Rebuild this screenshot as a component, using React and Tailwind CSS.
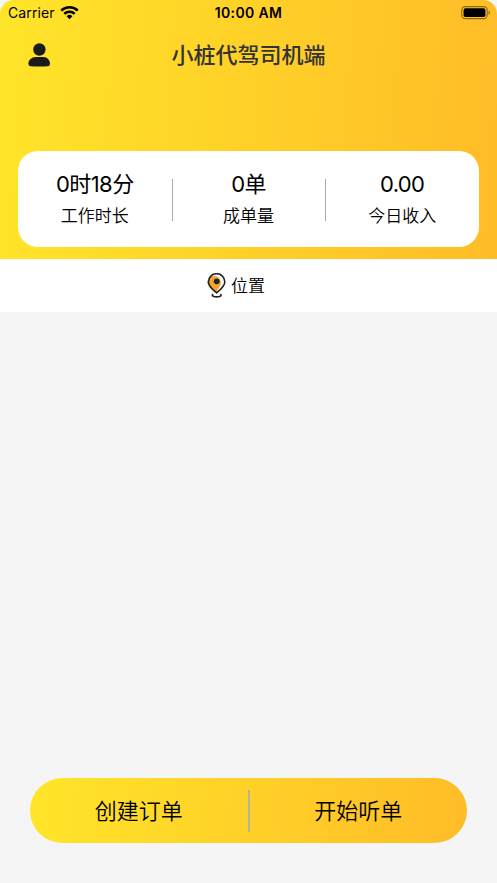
const stats = [
  { value: '0时18分', label: '工作时长' },
  { value: '0单', label: '成单量' },
  { value: '0.00', label: '今日收入' },
];

function WifiIcon() {
  return (
    <svg className="ml-[5px] h-[14px] w-[19px]" viewBox="0 0 19 14" fill="none" stroke="#000" strokeWidth="2.5">
      <path d="M1.2 4.7a11.8 11.8 0 0 1 16.6 0" />
      <path d="M4.3 7.9a7.4 7.4 0 0 1 10.4 0" />
      <path d="M9.5 13.2 6.6 10.3a4.1 4.1 0 0 1 5.8 0Z" fill="#000" stroke="none" />
    </svg>
  );
}

function BatteryIcon() {
  return (
    <svg className="h-[14px] w-[30px]" viewBox="0 0 30 14">
      <rect x="0.8" y="0.6" width="25.4" height="12" rx="3.6" fill="none" stroke="#000" strokeOpacity=".45" strokeWidth="1.1" />
      <rect x="2.6" y="2.2" width="21.8" height="8.8" rx="1.8" fill="#000" />
      <path d="M27.6 4.4v4.4c1.8-.7 1.8-3.7 0-4.4Z" fillOpacity=".5" />
    </svg>
  );
}

function UserIcon() {
  return (
    <svg className="h-6 w-6" viewBox="0 0 24 24" fill="#1a1a1a">
      <circle cx="12.4" cy="6.5" r="6.2" />
      <path d="M1.4 20.6C1.4 17 4.8 14 8.6 14h7.8c3.8 0 6.6 3 6.6 6.6 0 1.7-.8 2.5-2.2 2.6-5.5.5-11.5.5-17.2 0-1.4-.1-2.2-.9-2.2-2.6Z" />
    </svg>
  );
}

function PinIcon() {
  return (
    <svg className="h-[26px] w-5" viewBox="0 0 20 26" fill="none" stroke="#222" strokeWidth="1.6" strokeLinecap="round" strokeLinejoin="round">
      <path d="M8.4 19.8C4.5 16.6.4 13.3.4 9.6a6.8 6.8 0 0 1 7.6-6.6c6 .6 7.8 7.3 3.8 12.1Z" fill="#f4a52e" stroke="none" />
      <path d="M9.6 19.8C6 16.7 1.4 13.2 1.4 8.9a8.2 8.2 0 0 1 16.4 0c0 4.3-4.6 7.8-8.2 10.9Z" />
      <circle cx="9.7" cy="8.3" r="2.9" fill="#222" stroke="none" />
      <path d="M5.6 21.5c-2.3 3.2 10.5 3.2 8.2 0" />
    </svg>
  );
}

export default function App() {
  return (
    <div className="flex h-[883px] w-[497px] flex-col overflow-hidden bg-[#f5f5f5] font-['Inter','Noto_Sans_CJK_SC',sans-serif] text-black">
      <header className="h-[259px] rounded-t-[14px] bg-[linear-gradient(94deg,#ffe529,#ffbc27)]">
        <div className="grid h-[26px] grid-cols-3 items-center pr-[6px] pl-[8px] text-[14px] leading-none">
          <div className="flex items-center tracking-[0.1px]">
            <span>Carrier</span>
            <WifiIcon />
          </div>
          <span className="pr-[2px] text-center font-semibold tracking-[0.35px]">10:00 AM</span>
          <div className="flex justify-end">
            <BatteryIcon />
          </div>
        </div>
        <div className="grid h-[58px] grid-cols-[1fr_auto_1fr] items-center px-[27px]">
          <UserIcon />
          <h1 className="text-[22px] leading-none font-medium text-[#333]">小桩代驾司机端</h1>
        </div>
        <section className="mx-[18px] mt-[67.4px] grid h-24 grid-cols-3 rounded-[20px] bg-white">
          {stats.map((item, i) => (
            <div key={item.label} className="relative flex flex-col items-center pt-[20px]">
              <span className="text-[22px] leading-[26px] tracking-[-0.6px]">{item.value}</span>
              <span className="mt-[7px] text-[17px] leading-6 font-[350]">{item.label}</span>
              {i < 2 && <i className="absolute top-[27.5px] right-[-1px] h-[42px] w-px bg-[#aaa]" />}
            </div>
          ))}
        </section>
      </header>
      <div className="flex h-[53px] items-center justify-center bg-white pr-[25px]">
        <PinIcon />
        <span className="ml-1 pt-px text-[17px] leading-6 font-[350]">位置</span>
      </div>
      <main className="flex-1" />
      <footer className="mx-[30px] mb-10 flex h-[65px] items-center rounded-full bg-[linear-gradient(97deg,#ffe529,#ffbc27)] text-[22px] font-[350]">
        <button className="flex-1 pt-[2px]">创建订单</button>
        <i className="h-[42px] w-[2px] bg-[#bbb396]" />
        <button className="flex-1 pt-[2px]">开始听单</button>
      </footer>
    </div>
  );
}
